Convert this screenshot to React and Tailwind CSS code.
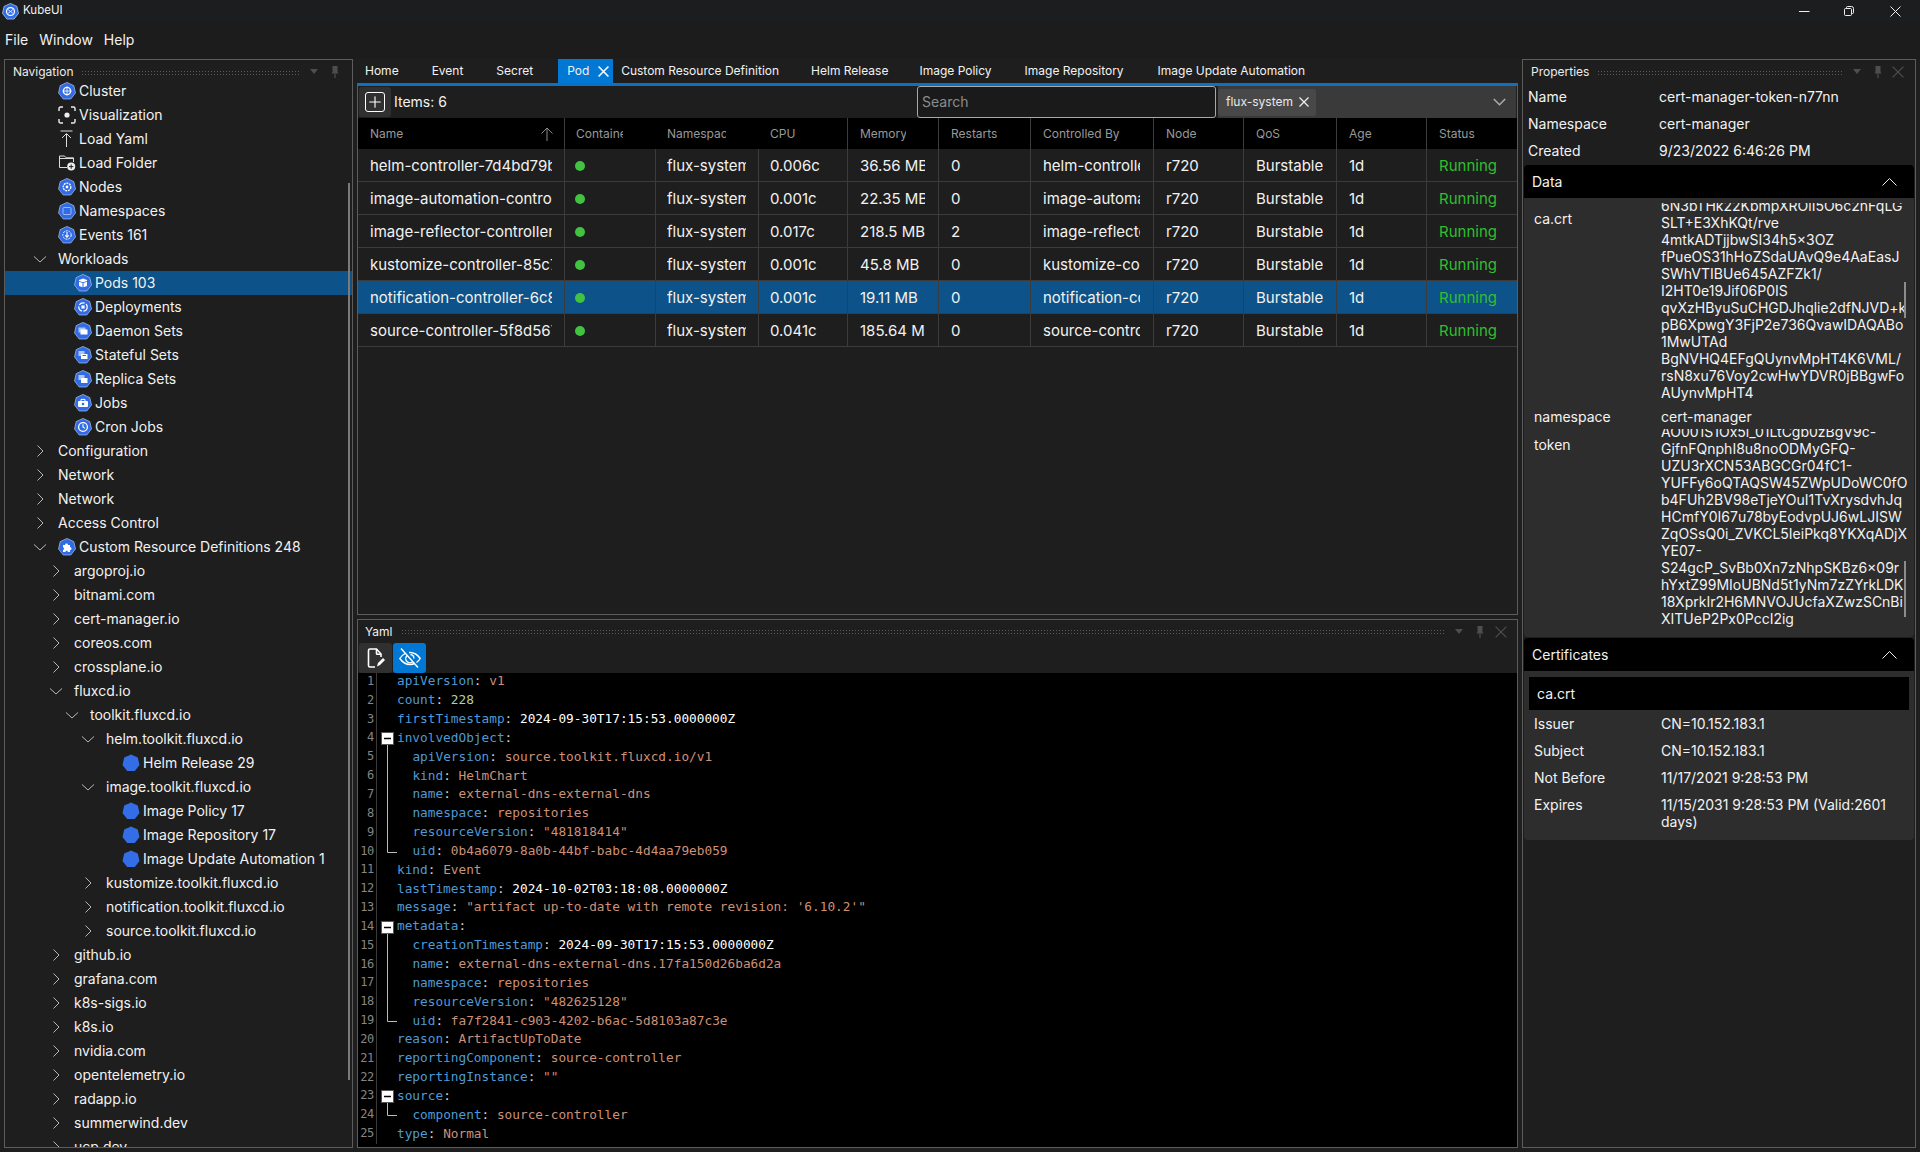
import React from "react";
import { Plus } from "lucide-react";

const Hept = ({ children, plain }) => (
  <svg width="18" height="18" viewBox="0 0 18 18" className="shrink-0">
    <polygon points="9,0.4 15.8,3.6 17.5,11 12.8,17 5.2,17 0.5,11 2.2,3.6" fill={plain ? "#346ee6" : "#326ce5"} stroke={plain ? "none" : "#c6d4f5"} strokeWidth="0.6" />
    {children}
  </svg>
);
const inner = {
  cluster: <g fill="none" stroke="#fff"><circle cx="9" cy="9" r="3.6" strokeWidth="1.4" /><path d="M9 4.4v9.2M4.6 9h8.8" strokeWidth="0.8" /></g>,
  nodes: <g fill="none" stroke="#fff"><circle cx="9" cy="9" r="3.8" strokeWidth="1.3" strokeDasharray="2 .8" /><circle cx="9" cy="9" r="1.4" fill="#fff" stroke="none" /></g>,
  ns: <rect x="5" y="5.5" width="8" height="7" rx="1" fill="none" stroke="#9db8f2" strokeWidth="1" />,
  events: <g fill="none" stroke="#fff"><circle cx="9" cy="9" r="4.2" strokeWidth="1" strokeDasharray="2 1" /><path d="M9 6v5M7.2 9.4 9 11.2l1.8-1.8" strokeWidth="1.1" /></g>,
  pod: <g><path d="M9 4.6 13 6v1L9 8.300 5 7V6z" fill="#fff" /><path d="M5 7.800l3.500 1.200v4.300L5 12zM13 7.800 9.500 9v4.300L13 12z" fill="#fff" /></g>,
  deploy: <g fill="none" stroke="#fff"><circle cx="9" cy="9" r="4.2" strokeWidth="1.2" strokeDasharray="6 1.5" /><rect x="7.4" y="7.4" width="3.2" height="3.2" fill="#fff" stroke="none" /></g>,
  ds: <g fill="#fff"><rect x="4.5" y="5.5" width="7" height="5" opacity=".6" /><rect x="6.5" y="7.5" width="7" height="5" /></g>,
  ss: <g fill="#fff"><rect x="4.5" y="5" width="6" height="5" opacity=".6" /><path d="M7 8h6.500v5H7z" /><path d="M8.500 9.500h3.500" stroke="#326ce5" /></g>,
  rs: <g fill="#fff"><rect x="4.5" y="5" width="6" height="5" opacity=".6" /><rect x="7" y="8" width="6.5" height="5" /></g>,
  jobs: <g fill="#fff"><rect x="4" y="7" width="10" height="6" rx="1" /><path d="M7 7V5.400h4V7" fill="none" stroke="#fff" /><circle cx="9" cy="10" r="1.3" fill="#326ce5" /></g>,
  cron: <g fill="none" stroke="#fff"><circle cx="9" cy="9" r="4.4" strokeWidth="1.3" /><path d="M9 6.200V9l2 1.400" strokeWidth="1.1" /></g>,
  crd: <path d="M5 7h2.200c-.5-2 3.200-2 2.700 0H12v2.200c2-.5 2 3.200 0 2.700V14H9.800c.4-1.600-2.600-1.600-2.200 0H5v-2.200c1.500.4 1.500-2.600 0-2.200z" fill="#fff" />,
};

const VisIcon = () => (
  <svg width="18" height="18" viewBox="0 0 18 18" className="shrink-0" fill="none" stroke="#eee" strokeWidth="1.4">
    <path d="M1 5V2.600Q1 1 2.600 1H5M13 1h2.400Q17 1 17 2.600V5M17 13v2.400q0 1.600-1.600 1.600H13M5 17H2.600Q1 17 1 15.400V13" />
    <circle cx="9" cy="9" r="2.6" fill="#eee" stroke="none" />
  </svg>
);
const UploadIcon = () => (
  <svg width="18" height="18" viewBox="0 0 18 18" className="shrink-0" fill="none" stroke="#ddd" strokeWidth="1">
    <path d="M2.500 1h12M8.500 17V4M4 8l4.500-4.500L13 8" />
  </svg>
);
const FolderIcon = () => (
  <svg width="18" height="18" viewBox="0 0 18 18" className="shrink-0" fill="none" stroke="#ddd" strokeWidth="1">
    <path d="M9 13.500H1.500V2h5l1.600 1.800h7.400V8M1.500 4.500h14" />
    <circle cx="13.2" cy="12.6" r="4" fill="#eee" stroke="none" />
    <path d="M13.200 10.400v4.400M11 12.600h4.400" stroke="#222" />
  </svg>
);
const Chev = ({ open }) => (
  <svg width="16" height="16" viewBox="0 0 16 16" className="shrink-0" fill="none" stroke="#b8b8b8" strokeWidth="1">
    {open ? <path d="M2 5.500l6 5.500 6-5.500" /> : <path d="M5.500 2.500 11 8l-5.500 5.500" />}
  </svg>
);
const Cross = ({ s, w = 1, c = "#eee" }) => (
  <svg width={s} height={s} viewBox="0 0 10 10" className="shrink-0" fill="none" stroke={c} strokeWidth={w}>
    <path d="M.5.5l9 9M9.500.5l-9 9" />
  </svg>
);
const ChevUp = () => (
  <svg width="15" height="8" viewBox="0 0 15 8" className="shrink-0" fill="none" stroke="#eee" strokeWidth="1"><path d="M.5 7.500l7-7 7 7" /></svg>
);

const leafPad = ["pl-[53px]", "pl-[69px]", "pl-[85px]", "pl-[101px]", "pl-[117px]"];
const chevPad = ["pl-[27px]", "pl-[43px]", "pl-[59px]", "pl-[75px]"];

const tree = [
  { t: "Cluster", d: 0, i: "cluster" }, { t: "Visualization", d: 0, c: <VisIcon /> }, { t: "Load Yaml", d: 0, c: <UploadIcon /> },
  { t: "Load Folder", d: 0, c: <FolderIcon /> }, { t: "Nodes", d: 0, i: "nodes" }, { t: "Namespaces", d: 0, i: "ns" }, { t: "Events 161", d: 0, i: "events" },
  { t: "Workloads", d: 0, ch: "open" }, { t: "Pods 103", d: 1, i: "pod", sel: true }, { t: "Deployments", d: 1, i: "deploy" }, { t: "Daemon Sets", d: 1, i: "ds" },
  { t: "Stateful Sets", d: 1, i: "ss" }, { t: "Replica Sets", d: 1, i: "rs" }, { t: "Jobs", d: 1, i: "jobs" }, { t: "Cron Jobs", d: 1, i: "cron" },
  { t: "Configuration", d: 0, ch: "closed" }, { t: "Network", d: 0, ch: "closed" }, { t: "Network", d: 0, ch: "closed" }, { t: "Access Control", d: 0, ch: "closed" },
  { t: "Custom Resource Definitions 248", d: 0, ch: "open", i: "crd" },
  ...["argoproj.io", "bitnami.com", "cert-manager.io", "coreos.com", "crossplane.io"].map((t) => ({ t, d: 1, ch: "closed" })),
  { t: "fluxcd.io", d: 1, ch: "open" }, { t: "toolkit.fluxcd.io", d: 2, ch: "open" }, { t: "helm.toolkit.fluxcd.io", d: 3, ch: "open" },
  { t: "Helm Release 29", d: 4, p: true }, { t: "image.toolkit.fluxcd.io", d: 3, ch: "open" },
  { t: "Image Policy 17", d: 4, p: true }, { t: "Image Repository 17", d: 4, p: true }, { t: "Image Update Automation 1", d: 4, p: true },
  { t: "kustomize.toolkit.fluxcd.io", d: 3, ch: "closed" }, { t: "notification.toolkit.fluxcd.io", d: 3, ch: "closed" }, { t: "source.toolkit.fluxcd.io", d: 3, ch: "closed" },
  ...["github.io", "grafana.com", "k8s-sigs.io", "k8s.io", "nvidia.com", "opentelemetry.io", "radapp.io", "summerwind.dev", "ucp.dev"].map((t) => ({ t, d: 1, ch: "closed" })),
];

const TreeRow = ({ r }) => (
  <div className={`h-[24px] flex items-center shrink-0 whitespace-nowrap ${r.sel ? "bg-[#0d5288]" : ""} ${r.ch ? chevPad[r.d] : leafPad[r.d]}`}>
    {r.ch && <span className="mr-[10px] flex"><Chev open={r.ch === "open"} /></span>}
    {r.i && <span className="mr-[3px] flex"><Hept>{inner[r.i]}</Hept></span>}
    {r.c && <span className="mr-[3px] flex">{r.c}</span>}
    {r.p && <span className="mr-[3px] flex"><Hept plain /></span>}
    <span className="pb-[1px]">{r.t}</span>
  </div>
);

const Pin = () => (
  <svg width="10" height="12" viewBox="0 0 10 12" fill="#4e4e4e"><path d="M2.500 0h5v6l1 1.500h-7l1-1.500z" /><rect x="4.4" y="7.5" width="1.2" height="4.5" /></svg>
);
const Caret = () => (
  <svg width="10" height="6" viewBox="0 0 10 6" fill="#4e4e4e"><path d="M1 0h8L5 5z" /></svg>
);
const Grip = () => (
  <div className="flex-1 h-[5px] bg-[radial-gradient(circle,#5a5a5a_0.7px,transparent_0.9px)] bg-[length:3px_3px]" />
);
const PanelHead = ({ title, close, gapClass }) => (
  <div className={`h-[24px] shrink-0 flex items-center text-[12px] text-[#ececec] ${gapClass}`}>
    <span className="mr-[8px]">{title}</span>
    <Grip />
    <span className="ml-[10px] flex"><Caret /></span>
    <span className="ml-[11px] flex"><Pin /></span>
    {close && <span className="ml-[9px] flex"><Cross s={12} c="#4e4e4e" /></span>}
  </div>
);

const tabs = [["Home", "mr-[17px]"], ["Event", "mr-[17px]"], ["Secret", "mr-[17px]"], ["Pod", ""], ["Custom Resource Definition", "mr-[16px]"], ["Helm Release", "mr-[15px]"], ["Image Policy", "mr-[17px]"], ["Image Repository", "mr-[18px]"], ["Image Update Automation", ""]];

const cols = ["w-[206px]", "w-[91px]", "w-[103px]", "w-[89px]", "w-[91px]", "w-[92px]", "w-[123px]", "w-[90px]", "w-[93px]", "w-[90px]", "flex-1"];
const cellPad = ["pl-[12px] pr-[12px]", "pl-[10px] pr-[12px]", "pl-[11px] pr-[12px]", "pl-[11px] pr-[12px]", "pl-[12px] pr-[13px]", "pl-[12px] pr-[13px]", "pl-[12px] pr-[13px]", "pl-[12px] pr-[13px]", "pl-[12px] pr-[13px]", "pl-[12px] pr-[13px]", "pl-[12px] pr-[13px]"];
const heads = ["Name", "Containers", "Namespace", "CPU", "Memory", "Restarts", "Controlled By", "Node", "QoS", "Age", "Status"];
const headPad = ["pl-[12px]", "pl-[11px]", "pl-[12px]", "pl-[12px]", "pl-[12px]", "pl-[12px]", "pl-[12px]", "pl-[12px]", "pl-[12px]", "pl-[12px]", "pl-[12px]"];
const pods = [
  ["helm-controller-7d4bd79bbc", "0.006c", "36.56 MB", "0", "helm-controller-7d4"],
  ["image-automation-controller", "0.001c", "22.35 MB", "0", "image-automation"],
  ["image-reflector-controller-7", "0.017c", "218.5 MB", "2", "image-reflector-cont"],
  ["kustomize-controller-85c7bd", "0.001c", "45.8 MB", "0", "kustomize-controller"],
  ["notification-controller-6c8f", "0.001c", "19.11 MB", "0", "notification-controller"],
  ["source-controller-5f8d567f8", "0.041c", "185.64 MB", "0", "source-controller"],
];

const Cell = ({ i, children }) => (
  <div className={`${cols[i]} shrink-0 h-full flex items-center pt-[2px] ${cellPad[i]} ${i > 0 ? "border-l border-[#3c3c3c]" : ""}`}>
    <div className="overflow-hidden whitespace-nowrap w-full">{children}</div>
  </div>
);

const caLines = ["6N3bTHk22KbmpXROlI5O6c2nFqLG", "SLT+E3XhKQt/rve", "4mtkADTjjbwSI34h5x3OZ", "fPueOS31hHoZSdaUAvQ9e4AaEasJ", "SWhVTIBUe645AZFZk1/", "I2HT0e19Jif06P0IS", "qvXzHByuSuCHGDJhqlie2dfNJVD+k", "pB6XpwgY3FjP2e736QvawIDAQABo", "1MwUTAd", "BgNVHQ4EFgQUynvMpHT4K6VML/", "rsN8xu76Voy2cwHwYDVR0jBBgwFo", "AUynvMpHT4"];
const tokenLines = ["AO001S1Ox5i_01LtCgb0zBgV9c-", "GjfnFQnphI8u8noODMyGFQ-", "UZU3rXCN53ABGCGr04fC1-", "YUFFy6oQTAQSW45ZWpUDoWC0fO", "b4FUh2BV98eTjeYOuI1TvXrysdvhJq", "HCmfY0I67u78byEodvpUJ6wLJISW", "ZqOSsQ0i_ZVKCL5IeiPkq8YKXqADjX", "YE07-", "S24gcP_SvBb0Xn7zNhpSKBz6x09r", "hYxtZ99MIoUBNd5t1yNm7zZYrkLDK", "18XprkIr2H6MNVOJUcfaXZwzSCnBi", "XITUeP2Px0PccI2ig"];

const S = "#ce9178", W = "#ffffff", N = "#b5cea8";
const yaml = [
  [0, "apiVersion", S, "v1"], [0, "count", N, "228"], [0, "firstTimestamp", W, "2024-09-30T17:15:53.0000000Z"],
  [0, "involvedObject", S, "", "box"], [1, "apiVersion", S, "source.toolkit.fluxcd.io/v1", "line"], [1, "kind", S, "HelmChart", "line"],
  [1, "name", S, "external-dns-external-dns", "line"], [1, "namespace", S, "repositories", "line"], [1, "resourceVersion", S, '"481818414"', "line"],
  [1, "uid", S, "0b4a6079-8a0b-44bf-babc-4d4aa79eb059", "end"], [0, "kind", S, "Event"], [0, "lastTimestamp", W, "2024-10-02T03:18:08.0000000Z"],
  [0, "message", S, "\"artifact up-to-date with remote revision: '6.10.2'\""], [0, "metadata", S, "", "box"],
  [1, "creationTimestamp", W, "2024-09-30T17:15:53.0000000Z", "line"], [1, "name", S, "external-dns-external-dns.17fa150d26ba6d2a", "line"],
  [1, "namespace", S, "repositories", "line"], [1, "resourceVersion", S, '"482625128"', "line"], [1, "uid", S, "fa7f2841-c903-4202-b6ac-5d8103a87c3e", "end"],
  [0, "reason", S, "ArtifactUpToDate"], [0, "reportingComponent", S, "source-controller"], [0, "reportingInstance", S, '""'],
  [0, "source", S, "", "box"], [1, "component", S, "source-controller", "end"], [0, "type", S, "Normal"],
];

const Fold = ({ k }) => (
  <svg width="20" height="19" viewBox="0 0 20 19" className="shrink-0 overflow-visible">
    {k === "box" && <g><path d="M10.500 15v4" stroke="#bbb" /><rect x="4.5" y="3.5" width="12" height="12" fill="#fff" stroke="#555" /><path d="M7 9.500h7" stroke="#000" strokeWidth="1.5" /></g>}
    {k === "line" && <path d="M10.500 0v19" stroke="#bbb" />}
    {k === "end" && <path d="M10.500 0v9.500H20" stroke="#bbb" fill="none" />}
  </svg>
);

const KV = ({ k, v }) => (
  <div className="h-[27px] flex items-center pl-[5px] pb-[2px]">
    <span className="w-[131px] shrink-0">{k}</span>
    <span>{v}</span>
  </div>
);

const ScrollValue = ({ label, lines, thumb, bottomClass }) => (
  <div className={`flex overflow-hidden ${bottomClass}`}>
    <div className="w-[137px] pl-[10px] pt-[6.5px] shrink-0 leading-[17px]">{label}</div>
    <div className="flex-1 min-w-0 -mt-[6px] leading-[17px] whitespace-nowrap">
      {lines.map((l) => <div key={l}>{l}</div>)}
    </div>
    <div className="w-[2px] mr-[8px] shrink-0 flex flex-col justify-end"><div className={`w-[2px] bg-[#8c8c8c] ${thumb}`} /></div>
  </div>
);

const SectionHead = ({ title }) => (
  <div className="h-[33px] shrink-0 bg-black rounded-t-[4px] flex items-center justify-between pl-[8px] pr-[17px] text-[14px]">
    <span>{title}</span>
    <ChevUp />
  </div>
);

export default function App() {
  return (
    <div className="w-[1920px] h-[1152px] flex flex-col overflow-hidden bg-[#1e1e1e] text-[#f2f2f2] text-[14px] font-[family-name:Inter,sans-serif]">
      <div className="h-[22px] shrink-0 bg-[#1b1d1e] flex items-center pl-[2px] pr-[19px] text-[11.5px]">
        <svg width="17" height="17" viewBox="0 0 18 18" className="mr-[4px]">
          <polygon points="9,0.4 15.8,3.6 17.5,11 12.8,17 5.2,17 0.5,11 2.2,3.6" fill="#326ce5" stroke="#cfdcf8" strokeWidth="0.7" />
          <circle cx="9" cy="9" r="4.2" fill="none" stroke="#fff" strokeWidth="1.3" />
          <path d="M6.500 7l5 4M11.500 7l-5 4" stroke="#fff" strokeWidth=".9" />
        </svg>
        <span>KubeUI</span>
        <div className="flex-1" />
        <svg width="11" height="11" viewBox="0 0 11 11" className="mr-[34px]"><path d="M0 5.500h10.500" stroke="#eee" /></svg>
        <svg width="10" height="10" viewBox="0 0 10 10" className="mr-[36px]" fill="none" stroke="#eee"><rect x=".5" y="2.5" width="7" height="7" rx="1" /><path d="M2.500 2.500V1.500q0-1 1-1h4q2 0 2 2v4q0 1-1 1h-1" /></svg>
        <svg width="11" height="11" viewBox="0 0 11 11" stroke="#eee"><path d="M.5.5l10 10M10.500.5l-10 10" /></svg>
      </div>
      <div className="h-[37px] shrink-0 flex items-center gap-[11px] pl-[5px] pb-[2px] bg-[#1c1c1c]">
        <span>File</span><span>Window</span><span>Help</span>
      </div>
      <div className="flex-1 min-h-0 flex gap-[4px] px-[4px] pb-[4px]">
        {/* navigation */}
        <div className="w-[349px] shrink-0 border border-[#5c5c5c] flex flex-col overflow-hidden relative">
          <PanelHead title="Navigation" gapClass="pl-[8px] pr-[12px] -mb-[5px]" />
          <div className="flex-1 min-h-0 flex flex-col overflow-hidden">
            {tree.map((r, i) => <TreeRow key={i} r={r} />)}
          </div>
          <div className="absolute right-[2px] top-[123px] h-[897px] w-[2.5px] bg-[#7a7a7a]" />
        </div>
        {/* centre */}
        <div className="w-[1161px] shrink-0 flex flex-col gap-[4px]">
          <div className="h-[556px] shrink-0 flex flex-col">
            <div className="h-[24px] shrink-0 flex items-stretch text-[12px]">
              {tabs.map(([t, m]) =>
                t === "Pod" ? (
                  <div key={t} className="w-[55px] bg-[#0078d4] pl-[9px] pr-[4px] flex items-center justify-between">
                    <span>{t}</span><Cross s={11} w={1.4} c="#fff" />
                  </div>
                ) : (
                  <div key={t} className={`px-[8px] flex items-center ${m}`}>{t}</div>
                )
              )}
            </div>
            <div className="flex-1 min-h-0 flex flex-col border-t-[3px] border-t-[#0e70c0] border-x border-b border-x-[#5c5c5c] border-b-[#5c5c5c]">
              <div className="h-[32px] shrink-0 flex items-center pl-[1px] pr-[1px]">
                <div className="w-[32px] h-[30px] bg-[#303030] rounded-[3px] flex items-center justify-center">
                  <div className="w-[20px] h-[20px] border-[1.5px] border-white rounded-[3px] flex items-center justify-center"><Plus size={18} strokeWidth={1.5} color="#fff" /></div>
                </div>
                <span className="ml-[3px] w-[523px] pb-[1px]">Items: 6</span>
                <div className="w-[299px] h-[32px] border border-[#a8a8a8] rounded-[3px] bg-[#1a1a1a] flex items-center pl-[4px] pb-[1px] text-[#8c8c8c]">Search</div>
                <div className="ml-[2px] flex-1 h-[32px] bg-[#3a3a3a] flex items-center justify-between pr-[10px]">
                  <div className="w-[98px] h-[27px] bg-[#484848] rounded-[3px] flex items-center pl-[8px] gap-[6px] text-[12px] text-[#e8e8e8]">
                    <span>flux-system</span><Cross s={10} w={1.3} />
                  </div>
                  <svg width="13" height="8" viewBox="0 0 13 8" fill="none" stroke="#aaa" strokeWidth="1.6"><path d="M.8 1l5.700 5.700L12.200 1" /></svg>
                </div>
              </div>
              <div className="h-[31px] shrink-0 bg-black flex text-[12px] text-[#989898]">
                {heads.map((h, i) => (
                  <div key={h} className={`${cols[i]} shrink-0 flex items-center pr-[32px] relative ${headPad[i]} ${i > 0 && i !== 2 && i !== 3 ? "border-l border-[#3c3c3c]" : ""}`}>
                    <div className="overflow-hidden whitespace-nowrap flex-1">{h}</div>
                    {i === 0 && (
                      <svg width="12" height="14" viewBox="0 0 12 14" fill="none" stroke="#8a8a8a" strokeWidth="1" className="absolute right-[11px]"><path d="M6 14V1M.5 6.500 6 1l5.500 5.500" /></svg>
                    )}
                  </div>
                ))}
              </div>
              {pods.map((p, ri) => (
                <div key={p[0]} className={`h-[33px] shrink-0 flex border-b border-[#3c3c3c] text-[15px] ${ri === 4 ? "bg-[#0d5288]" : ""}`}>
                  <Cell i={0}>{p[0]}</Cell>
                  <Cell i={1}><div className="w-[10px] h-[10px] rounded-full bg-[#41c341]" /></Cell>
                  <Cell i={2}>flux-system</Cell>
                  <Cell i={3}>{p[1]}</Cell>
                  <Cell i={4}>{p[2]}</Cell>
                  <Cell i={5}>{p[3]}</Cell>
                  <Cell i={6}>{p[4]}</Cell>
                  <Cell i={7}>r720</Cell>
                  <Cell i={8}>Burstable</Cell>
                  <Cell i={9}>1d</Cell>
                  <Cell i={10}><span className="text-[#30bf30]">Running</span></Cell>
                </div>
              ))}
            </div>
          </div>
          {/* yaml */}
          <div className="flex-1 min-h-0 border border-[#5c5c5c] flex flex-col overflow-hidden">
            <div className="h-[23px] shrink-0 flex items-center text-[12px] pl-[7px] pr-[10px]">
              <span className="mr-[9px]">Yaml</span>
              <Grip />
              <span className="ml-[9px] flex"><Caret /></span>
              <span className="ml-[11px] flex"><Pin /></span>
              <span className="ml-[10px] flex"><Cross s={12} c="#4e4e4e" /></span>
            </div>
            <div className="h-[30px] shrink-0 flex gap-[1px] pl-[1px]">
              <div className="w-[33px] h-[30px] bg-[#303030] rounded-[3px] flex items-center justify-center">
                <svg width="18" height="22" viewBox="0 0 18 22" fill="none" stroke="#fff" strokeWidth="1.6">
                  <path d="M8 20H3q-1.500 0-1.500-1.500v-15Q1.500 2 3 2h6.500L14 7v3" />
                  <path d="M9.500 2v4.500q0 .8.8.8H14" />
                  <path d="M10 19.500l1-3.500 5-5 2 2-5 5z" fill="#fff" stroke="none" />
                </svg>
              </div>
              <div className="w-[33px] h-[30px] bg-[#0078d4] rounded-[3px] flex items-center justify-center">
                <svg width="24" height="22" viewBox="0 0 24 22" fill="none" stroke="#fff" strokeWidth="1.4">
                  <path d="M3 1.500l17 19" />
                  <path d="M7 6.500Q3.500 8.500 1.800 11.500 6 17.500 12 17.500q2.500 0 4.500-1M11 5.500q.5 0 1 0 6 0 10.200 6-1.500 2.500-3.700 4" />
                  <path d="M9 8.800a4 4 0 0 0 5.700 5.900M12.500 7.500a4 4 0 0 1 3.400 4" />
                </svg>
              </div>
            </div>
            <div className="flex-1 min-h-0 bg-black overflow-hidden text-[12.78px] font-[family-name:'DejaVu_Sans_Mono',monospace] whitespace-pre">
              {yaml.map(([ind, key, col, val, fold], i) => (
                <div key={i} className="h-[18.85px] flex items-center">
                  <span className="w-[17px] h-full shrink-0 pr-[1px] pb-[3px] flex items-center justify-end text-[12px] text-[#858585] tracking-[-0.3px]">{i + 1}</span>
                  <span className="w-[2px] h-full shrink-0 border-r border-[#3a3a3a]" />
                  <Fold k={fold} />
                  <span className={`pb-[3px] ${ind ? "pl-[15.4px]" : ""}`}>
                    <span className="text-[#4e9ad6]">{key}</span>
                    <span className="text-[#d4d4d4]">:</span>
                    {val && <span style={{ color: col }}> {val}</span>}
                  </span>
                </div>
              ))}
            </div>
          </div>
        </div>
        {/* properties */}
        <div className="w-[394px] shrink-0 border border-[#5c5c5c] flex flex-col overflow-hidden">
          <PanelHead title="Properties" close gapClass="pl-[8px] pr-[11px]" />
          <KV k="Name" v="cert-manager-token-n77nn" />
          <KV k="Namespace" v="cert-manager" />
          <KV k="Created" v="9/23/2022 6:46:26 PM" />
          <div className="mx-[1px] flex flex-col">
            <SectionHead title="Data" />
            <div className="h-[439px] bg-[#2d2d2d] rounded-b-[4px] flex flex-col overflow-hidden pt-[5px]">
              <ScrollValue label="ca.crt" lines={caLines} thumb="h-[36px] mb-[84px]" bottomClass="h-[199px]" />
              <div className="h-[27px] shrink-0 flex items-center pl-[10px] pt-[2px]">
                <span className="w-[127px]">namespace</span><span>cert-manager</span>
              </div>
              <ScrollValue label="token" lines={tokenLines} thumb="h-[56px] mb-[20px]" bottomClass="flex-1 min-h-0" />
            </div>
            <div className="mt-[1px]"><SectionHead title="Certificates" /></div>
            <div className="bg-[#2d2d2d] rounded-b-[4px] pt-[6px] pb-[9px]">
              <div className="mx-[5px] h-[33px] bg-black flex items-center pl-[8px]">ca.crt</div>
              <div className="pt-[1px] pl-[10px]">
                {[["Issuer", "CN=10.152.183.1"], ["Subject", "CN=10.152.183.1"], ["Not Before", "11/17/2021 9:28:53 PM"]].map(([k, v]) => (
                  <div key={k} className="h-[27px] flex items-center pb-[2px]"><span className="w-[127px]">{k}</span><span>{v}</span></div>
                ))}
                <div className="flex pt-[4px] pb-[1px] leading-[17px]"><span className="w-[127px] shrink-0">Expires</span><span className="w-[250px]">11/15/2031 9:28:53 PM (Valid:2601 days)</span></div>
              </div>
            </div>
          </div>
        </div>
      </div>
    </div>
  );
}
